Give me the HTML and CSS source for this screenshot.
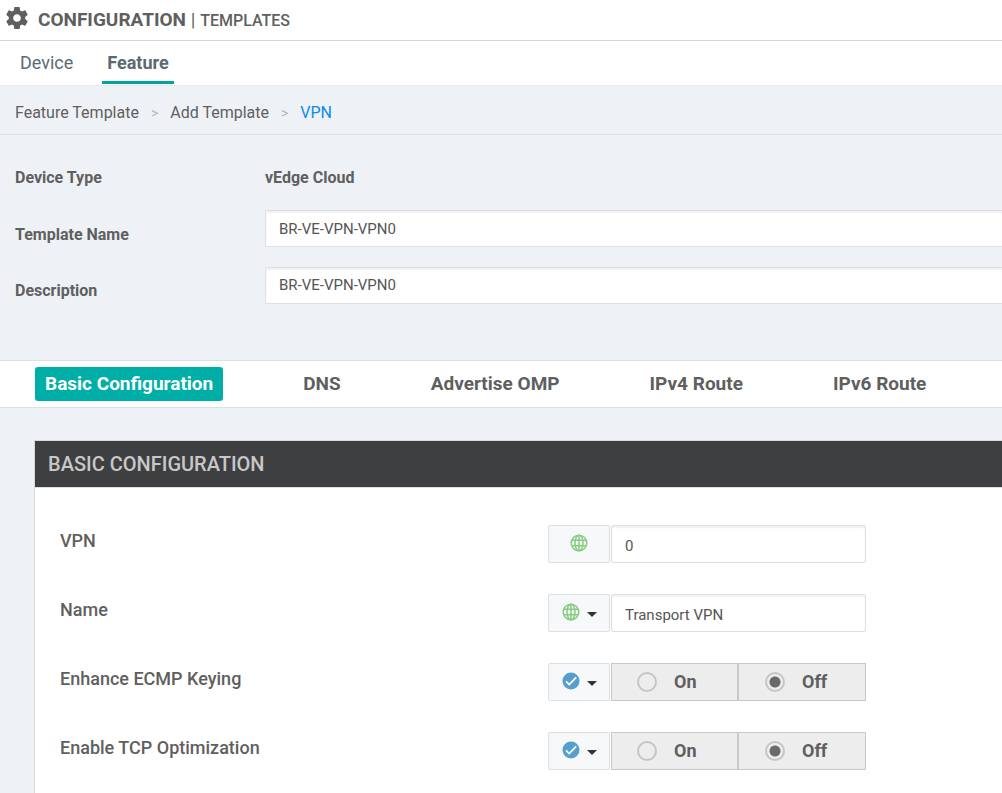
FILE: index.html
```html
<!DOCTYPE html>
<html lang="en">
<head>
<meta charset="utf-8">
<title>Configuration | Templates</title>
<link rel="stylesheet" href="styles.css">
</head>
<body>
<svg class="sprite" aria-hidden="true">
  <symbol id="globe" viewBox="0 0 18 18">
    <g fill="none" stroke="currentColor" stroke-width="1.5">
      <circle cx="9" cy="9" r="7.8"/>
      <ellipse cx="9" cy="9" rx="4" ry="7.8"/>
      <path d="M9 1v16M2 6.3h14M2 11.7h14"/>
    </g>
  </symbol>
  <symbol id="check" viewBox="0 0 18 18">
    <circle cx="9" cy="9" r="8.5" fill="currentColor"/>
    <path d="M4 9.4l3.2 3.2 7-7.2" fill="none" stroke="#fff" stroke-width="1.7"/>
  </symbol>
</svg>

<header class="page-header">
  <svg class="gear" viewBox="2 2 20 20" aria-hidden="true"><path fill="currentColor" d="M19.43 12.98c.04-.32.07-.64.07-.98s-.03-.66-.07-.98l2.11-1.65c.19-.15.24-.42.12-.64l-2-3.46c-.12-.22-.39-.3-.61-.22l-2.49 1c-.52-.4-1.08-.73-1.69-.98l-.38-2.65C14.46 2.18 14.25 2 14 2h-4c-.25 0-.46.18-.49.42l-.38 2.65c-.61.25-1.17.59-1.69.98l-2.49-1c-.23-.09-.49 0-.61.22l-2 3.46c-.13.22-.07.49.12.64l2.11 1.65c-.04.32-.07.65-.07.98s.03.66.07.98l-2.11 1.65c-.19.15-.24.42-.12.64l2 3.46c.12.22.39.3.61.22l2.49-1c.52.4 1.08.73 1.69.98l.38 2.65c.03.24.24.42.49.42h4c.25 0 .46-.18.49-.42l.38-2.65c.61-.25 1.17-.59 1.69-.98l2.49 1c.23.09.49 0 .61-.22l2-3.46c.12-.22.07-.49-.12-.64l-2.11-1.65zM12 15.5c-1.93 0-3.5-1.57-3.5-3.5s1.57-3.5 3.5-3.5 3.5 1.57 3.5 3.5-1.57 3.5-3.5 3.5z"/></svg>
  <h1 class="title">CONFIGURATION <span class="bar">|</span> <span class="subtitle">TEMPLATES</span></h1>
</header>

<nav class="tabs">
  <a class="tab" href="#device">Device</a>
  <a class="tab tab-active" href="#feature">Feature</a>
</nav>

<nav class="crumbs">
  <a class="crumb" href="#feature">Feature Template</a>
  <span class="crumb-sep">&gt;</span>
  <a class="crumb" href="#add">Add Template</a>
  <span class="crumb-sep">&gt;</span>
  <a class="crumb crumb-current" href="#vpn">VPN</a>
</nav>

<form class="template-form">
  <section class="meta">
    <span class="meta-label">Device Type</span>
    <span class="meta-label">vEdge Cloud</span>
    <label class="meta-label" for="template-name">Template Name</label>
    <input class="text-box meta-box" id="template-name" type="text" value="BR-VE-VPN-VPN0">
    <label class="meta-label" for="description">Description</label>
    <input class="text-box meta-box" id="description" type="text" value="BR-VE-VPN-VPN0">
  </section>

  <nav class="sections">
    <a class="section-link section-active" href="#basic">Basic Configuration</a>
    <a class="section-link" href="#dns">DNS</a>
    <a class="section-link" href="#omp">Advertise OMP</a>
    <a class="section-link" href="#ipv4">IPv4 Route</a>
    <a class="section-link" href="#ipv6">IPv6 Route</a>
  </nav>

  <section class="panel" id="basic">
    <h2 class="panel-title">BASIC CONFIGURATION</h2>
    <div class="rows">
      <div class="row">
        <label class="row-label" for="vpn">VPN</label>
        <button class="scope" type="button" aria-label="Global"><svg class="scope-icon global"><use href="#globe"/></svg></button>
        <input class="text-box value" id="vpn" type="text" value="0">
      </div>
      <div class="row">
        <label class="row-label" for="name">Name</label>
        <button class="scope" type="button" aria-label="Global"><svg class="scope-icon global"><use href="#globe"/></svg><span class="caret"></span></button>
        <input class="text-box value" id="name" type="text" value="Transport VPN">
      </div>
      <div class="row" role="radiogroup" aria-labelledby="ecmp-label">
        <span class="row-label" id="ecmp-label">Enhance ECMP Keying</span>
        <button class="scope" type="button" aria-label="Default"><svg class="scope-icon default"><use href="#check"/></svg><span class="caret"></span></button>
        <div class="value toggle">
          <label class="option"><input class="radio" type="radio" name="ecmp">On</label>
          <label class="option"><input class="radio" type="radio" name="ecmp" checked>Off</label>
        </div>
      </div>
      <div class="row" role="radiogroup" aria-labelledby="tcp-label">
        <span class="row-label" id="tcp-label">Enable TCP Optimization</span>
        <button class="scope" type="button" aria-label="Default"><svg class="scope-icon default"><use href="#check"/></svg><span class="caret"></span></button>
        <div class="value toggle">
          <label class="option"><input class="radio" type="radio" name="tcp">On</label>
          <label class="option"><input class="radio" type="radio" name="tcp" checked>Off</label>
        </div>
      </div>
    </div>
  </section>
</form>
</body>
</html>
```

FILE: styles.css
```css
* { box-sizing: border-box; }

body {
  margin: 0;
  min-height: 100vh;
  display: flex;
  flex-direction: column;
  background: #eef1f6;
  color: #5f5f5f;
  font: 16px/20px Roboto, "Liberation Sans", sans-serif;
}

a { color: inherit; text-decoration: none; }

.sprite { display: none; }

.page-header {
  display: flex;
  align-items: center;
  gap: 10px;
  height: 41px;
  padding: 0 6px;
  background: #fff;
  border-bottom: 1px solid #d6d6d6;
}
.gear { width: 22px; height: 22px; margin-bottom: 4px; }
.title { margin: 0; font-size: 19px; font-weight: 700; line-height: 24px; }
.bar { font-weight: 400; }
.subtitle { font-size: 16px; font-weight: 500; }

.tabs {
  display: flex;
  gap: 24px;
  height: 44px;
  padding: 0 15px;
  background: #fff;
}
.tab {
  padding: 12px 5px 0;
  border-bottom: 3px solid transparent;
  margin-bottom: 1px;
  font-size: 18px;
  color: #5a6a75;
}
.tab-active { font-weight: 700; border-color: #00a3a0; }

.crumbs {
  display: flex;
  align-items: center;
  gap: 12px;
  height: 50px;
  padding: 6px 15px 0;
  border-top: 1px solid #e6e8ec;
  border-bottom: 1px solid #dcdfe3;
}
.crumb-sep { font-size: 14px; color: #b5b8bc; }
.crumb-current { color: #0a8ce8; }

.template-form { display: flex; flex-direction: column; flex: 1; }

.meta {
  display: grid;
  grid-template-columns: 250px 1fr;
  grid-template-rows: 38px 37px 38px;
  row-gap: 19px;
  align-items: center;
  padding: 18px 0 56px 15px;
}
.meta-label { padding-top: 12px; font-weight: 700; }

.text-box {
  height: 37px;
  padding: 0 13px;
  border: 1px solid #dcdfe3;
  border-radius: 2px;
  background: #fff;
  box-shadow: inset 0 2px 2px rgba(0, 0, 0, .06);
  color: #555;
  font: inherit;
  font-size: 15px;
}
.meta-box { width: 100%; border-right: 0; border-radius: 2px 0 0 2px; }

.sections {
  display: flex;
  align-items: center;
  gap: 70px;
  height: 48px;
  padding: 0 35px;
  background: #fff;
  border-top: 1px solid #dcdfe3;
  border-bottom: 1px solid #dcdfe3;
  white-space: nowrap;
}
.section-link { padding: 0 10px; border-radius: 3px; font-size: 19px; font-weight: 700; line-height: 34px; }
.section-active { background: #00aea8; color: #fff; }

.panel {
  flex: 1;
  margin: 32px 0 0 34px;
  background: #fff;
  border-top: 1px solid #d5dadd;
  border-left: 1px solid #d5dadd;
}
.panel-title {
  margin: 0;
  padding: 0 13px;
  background: #3e3f41;
  color: #c8c8c8;
  font-size: 20px;
  font-weight: 500;
  line-height: 46px;
  border-bottom: 1px solid #dcdfe3;
}
.rows { display: grid; gap: 31px; padding: 37px 25px 24px; }
.row { display: grid; grid-template-columns: 488px 62px 256px; }
.row-label { padding-top: 6px; font-size: 18px; font-weight: 500; }

.scope {
  display: flex;
  align-items: center;
  justify-content: center;
  gap: 7px;
  height: 38px;
  padding: 0 0 2px;
  border: 1px solid #dcdfe3;
  border-radius: 2px;
  background: #f6f8fa;
}
.scope-icon { width: 18px; height: 18px; }
.global { color: #86cc80; }
.default { color: #549fcd; }
.caret {
  margin-top: 4px;
  border: 5px solid transparent;
  border-top-color: #333;
  border-bottom: 0;
}
.value { height: 38px; margin-left: 1px; }
.text-box.value { padding-top: 3px; }

.toggle { display: grid; grid-template-columns: 125px 1fr; background: #ededed; border: 1px solid #c8c8c8; }
.option {
  display: flex;
  align-items: center;
  gap: 17px;
  padding-left: 25px;
  font-size: 18px;
  font-weight: 700;
}
.option + .option { padding-left: 26px; border-left: 2px solid #c8c8c8; }
.radio {
  appearance: none;
  width: 20px;
  height: 20px;
  margin: 0;
  border: 2px solid #c4c5c8;
  border-radius: 50%;
}
.radio:checked { background: radial-gradient(circle, #6a6a6a 5px, transparent 6px); }
```
